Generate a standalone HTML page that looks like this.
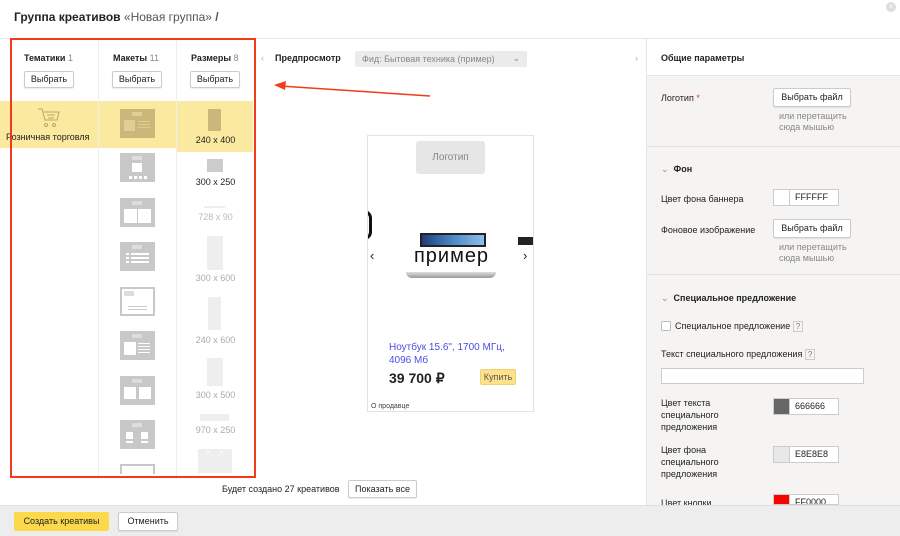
<!DOCTYPE html>
<html><head><meta charset="utf-8"><style>
*{box-sizing:border-box;margin:0;padding:0}
body{width:900px;height:536px;overflow:hidden;background:#fff;font-family:"Liberation Sans","Noto Sans CJK SC",sans-serif;font-size:9px;color:#222;position:relative}
.a{position:absolute}
.btn{position:absolute;border:1px solid #ccc;border-radius:2px;background:#fff;font-size:9px;text-align:center;color:#222;box-shadow:0 1px 1px rgba(0,0,0,.08)}
.g{color:#888}
.ic{position:absolute;background:#c8c8c8}
.ic i{position:absolute;background:#fff}
.sz{position:absolute;width:77px;text-align:center;font-size:9px}
.lbl{position:absolute;left:661px;font-size:9px;color:#222;line-height:12px}
.sw{position:absolute;left:773px;width:66px;height:17px;border:1px solid #ccc;background:#fff;font-size:9px}
.sw b{position:absolute;left:0;top:0;width:16px;height:15px;border-right:1px solid #ccc}
.sw span{position:absolute;left:21px;top:2px}
</style></head><body>
<div class="a" style="left:14px;top:10px;font-size:12px;font-weight:bold">Группа креативов <span style="font-weight:normal;color:#555">«Новая группа»</span> <span style="color:#555">/</span></div>
<div class="a" style="left:886px;top:2px;width:10px;height:10px;border-radius:50%;background:#ddd;color:#fff;font-size:8px;line-height:10px;text-align:center">×</div>
<div class="a" style="left:0;top:38px;width:900px;height:1px;background:#e8e8e8"></div>
<div class="a" style="left:98px;top:39px;width:1px;height:440px;background:#eee"></div>
<div class="a" style="left:176px;top:39px;width:1px;height:440px;background:#eee"></div>
<div class="a" style="left:12px;top:101px;width:86px;height:1px;background:#eee"></div>
<div class="a" style="left:0;top:101px;width:98px;height:47px;background:#fbe9a0"></div>
<div class="a" style="left:99px;top:101px;width:77px;height:47px;background:#fbe9a0"></div>
<div class="a" style="left:177px;top:101px;width:76px;height:51px;background:#fbe9a0"></div>
<div class="a" style="left:24px;top:53px;font-weight:bold">Тематики <span class="g" style="font-weight:normal">1</span></div>
<div class="a" style="left:113px;top:53px;font-weight:bold">Макеты <span class="g" style="font-weight:normal">11</span></div>
<div class="a" style="left:191px;top:53px;font-weight:bold">Размеры <span class="g" style="font-weight:normal">8</span></div>
<div class="btn" style="left:24px;top:71px;width:50px;height:17px;line-height:15px">Выбрать</div>
<div class="btn" style="left:112px;top:71px;width:50px;height:17px;line-height:15px">Выбрать</div>
<div class="btn" style="left:190px;top:71px;width:50px;height:17px;line-height:15px">Выбрать</div>
<svg class="a" style="left:36px;top:107px" width="26" height="22" viewBox="0 0 26 22" fill="none" stroke="#b8a66a" stroke-width="1"><path d="M2 2h4l3 11h12l2-8H8"/><path d="M11 8h8M12 11h6"/><circle cx="10" cy="18" r="1.5"/><circle cx="18" cy="18" r="1.5"/></svg>
<div class="a" style="left:6px;top:132px;font-size:9px">Розничная торговля</div>
<div class="ic" style="left:120px;top:109px;width:35px;height:29px;background:#cbb77a"><i style="left:12px;top:3px;width:10px;height:4px;background:#e0cf95"></i><i style="left:4px;top:11px;width:11px;height:11px;background:#e0cf95"></i><i style="left:18px;top:12px;width:12px;height:1px;background:#e0cf95"></i><i style="left:18px;top:15px;width:12px;height:1px;background:#e0cf95"></i><i style="left:18px;top:18px;width:12px;height:1px;background:#e0cf95"></i></div>
<div class="ic" style="left:120px;top:153px;width:35px;height:29px"><i style="left:12px;top:3px;width:10px;height:4px;background:#ddd"></i><i style="left:12px;top:10px;width:10px;height:9px"></i><i style="left:9px;top:23px;width:3px;height:3px"></i><i style="left:14px;top:23px;width:3px;height:3px"></i><i style="left:19px;top:23px;width:3px;height:3px"></i><i style="left:24px;top:23px;width:3px;height:3px"></i></div>
<div class="ic" style="left:120px;top:198px;width:35px;height:29px"><i style="left:12px;top:3px;width:10px;height:4px;background:#ddd"></i><i style="left:4px;top:11px;width:13px;height:14px"></i><i style="left:18px;top:11px;width:13px;height:14px"></i></div>
<div class="ic" style="left:120px;top:242px;width:35px;height:29px"><i style="left:12px;top:3px;width:10px;height:4px;background:#ddd"></i><i style="left:6px;top:11px;width:3px;height:2px"></i><i style="left:11px;top:11px;width:18px;height:2px"></i><i style="left:6px;top:15px;width:3px;height:2px"></i><i style="left:11px;top:15px;width:18px;height:2px"></i><i style="left:6px;top:19px;width:3px;height:2px"></i><i style="left:11px;top:19px;width:18px;height:2px"></i></div>
<div class="ic" style="left:120px;top:287px;width:35px;height:29px"><i style="left:2px;top:2px;width:31px;height:25px"></i><i style="left:4px;top:4px;width:10px;height:5px;background:#ddd"></i><i style="left:8px;top:19px;width:19px;height:1px;background:#ccc"></i><i style="left:8px;top:22px;width:19px;height:1px;background:#ccc"></i></div>
<div class="ic" style="left:120px;top:331px;width:35px;height:29px"><i style="left:12px;top:3px;width:10px;height:4px;background:#ddd"></i><i style="left:4px;top:11px;width:12px;height:13px"></i><i style="left:18px;top:12px;width:12px;height:1px"></i><i style="left:18px;top:15px;width:12px;height:1px"></i><i style="left:18px;top:18px;width:12px;height:1px"></i><i style="left:18px;top:21px;width:12px;height:1px"></i></div>
<div class="ic" style="left:120px;top:376px;width:35px;height:29px"><i style="left:12px;top:3px;width:10px;height:4px;background:#ddd"></i><i style="left:4px;top:11px;width:12px;height:12px"></i><i style="left:19px;top:11px;width:12px;height:12px"></i></div>
<div class="ic" style="left:120px;top:420px;width:35px;height:29px"><i style="left:12px;top:3px;width:10px;height:4px;background:#ddd"></i><i style="left:6px;top:12px;width:7px;height:7px"></i><i style="left:21px;top:12px;width:7px;height:7px"></i><i style="left:6px;top:21px;width:7px;height:2px"></i><i style="left:21px;top:21px;width:7px;height:2px"></i></div>
<div class="ic" style="left:120px;top:464px;width:35px;height:10px"><i style="left:2px;top:2px;width:31px;height:8px"></i></div>
<div class="a" style="left:208px;top:109px;width:13px;height:22px;background:#cbb77a"></div>
<div class="sz" style="left:177px;top:135px">240 x 400</div>
<div class="a" style="left:207px;top:159px;width:16px;height:13px;background:#ccc"></div>
<div class="sz" style="left:177px;top:177px">300 x 250</div>
<div class="a" style="left:204px;top:206px;width:21px;height:2px;background:#eee"></div>
<div class="sz" style="left:177px;top:212px;color:#bbb">728 x 90</div>
<div class="a" style="left:207px;top:236px;width:16px;height:34px;background:#eee"></div>
<div class="sz" style="left:177px;top:273px;color:#aaa">300 x 600</div>
<div class="a" style="left:208px;top:297px;width:13px;height:33px;background:#eee"></div>
<div class="sz" style="left:177px;top:335px;color:#aaa">240 x 600</div>
<div class="a" style="left:207px;top:358px;width:16px;height:28px;background:#eee"></div>
<div class="sz" style="left:177px;top:390px;color:#aaa">300 x 500</div>
<div class="a" style="left:200px;top:414px;width:29px;height:7px;background:#eee"></div>
<div class="sz" style="left:177px;top:425px;color:#aaa">970 x 250</div>
<div class="a" style="left:198px;top:449px;width:34px;height:24px;background:#eee;color:#fff;font-size:8px;text-align:center;line-height:12px">↖ ↗</div>
<div class="a" style="left:10px;top:38px;width:246px;height:440px;border:2px solid #f23a1d"></div>
<svg class="a" style="left:270px;top:78px" width="165" height="24"><line x1="10" y1="8" x2="160" y2="18" stroke="#f23a1d" stroke-width="1.5"/><path d="M4 7 L16 3 L15 12 Z" fill="#f23a1d"/></svg>
<div class="a" style="left:261px;top:53px;color:#aaa">‹</div>
<div class="a" style="left:275px;top:53px;font-weight:bold">Предпросмотр</div>
<div class="a" style="left:355px;top:51px;width:172px;height:16px;background:#ebebeb;border-radius:2px;color:#888;padding:3px 7px">Фид: Бытовая техника (пример)<span style="position:absolute;right:7px;top:2px">⌄</span></div>
<div class="a" style="left:635px;top:53px;color:#aaa">›</div>
<div class="a" style="left:367px;top:135px;width:167px;height:277px;border:1px solid #e2e2e2;background:#fff;overflow:hidden">
 <div class="a" style="left:48px;top:5px;width:69px;height:33px;background:#e6e6e6;border-radius:3px;color:#888;font-size:10px;text-align:center;line-height:33px">Логотип</div>
 <div class="a" style="left:-8px;top:74px;width:12px;height:30px;border:3px solid #111;border-left:none;border-radius:0 8px 8px 0"></div>
 <div class="a" style="left:150px;top:101px;width:20px;height:8px;background:#222"></div>
 <div class="a" style="left:52px;top:97px;width:66px;height:14px;background:linear-gradient(90deg,#1c3f7a,#4d89c8,#8ec0e8);border:2px solid #222"></div>
 <div class="a" style="left:38px;top:136px;width:90px;height:6px;background:linear-gradient(#ddd,#999);border-radius:0 0 8px 8px"></div>
 <div class="a" style="left:0;top:107px;width:167px;text-align:center;font-size:20px;color:#111;letter-spacing:1px;line-height:26px">пример</div>
 <div class="a" style="left:2px;top:112px;font-size:13px">‹</div>
 <div class="a" style="left:155px;top:112px;font-size:13px">›</div>
 <div class="a" style="left:21px;top:205px;color:#4b4be6;font-size:10px;line-height:13px">Ноутбук 15.6", 1700 МГц,<br>4096 Мб</div>
 <div class="a" style="left:21px;top:234px;font-size:14px;font-weight:bold">39 700 ₽</div>
 <div class="a" style="left:112px;top:233px;width:36px;height:16px;background:#fde28a;border:1px solid #f0d070;border-radius:2px;font-size:9px;text-align:center;line-height:14px;color:#555">Купить</div>
 <div class="a" style="left:3px;top:267px;font-size:7px;color:#444">О продавце</div>
</div>
<div class="a" style="left:222px;top:484px">Будет создано 27 креативов</div>
<div class="btn" style="left:348px;top:480px;width:69px;height:18px;line-height:16px">Показать все</div>
<div class="a" style="left:646px;top:39px;width:254px;height:466px;background:#f5f4f3;border-left:1px solid #e5e5e5"></div>
<div class="a" style="left:647px;top:39px;width:253px;height:37px;background:#fff;border-bottom:1px solid #e5e5e5"></div>
<div class="a" style="left:661px;top:53px;font-weight:bold">Общие параметры</div>
<div class="lbl" style="top:92px">Логотип <span style="color:#e33">*</span></div>
<div class="btn" style="left:773px;top:88px;width:78px;height:19px;line-height:17px">Выбрать файл</div>
<div class="a" style="left:779px;top:111px;color:#888;line-height:11px">или перетащить<br>сюда мышью</div>
<div class="a" style="left:647px;top:146px;width:253px;height:1px;background:#e2e2e2"></div>
<div class="a" style="left:661px;top:164px;font-weight:bold"><span style="color:#888;font-weight:normal">⌄</span>&nbsp; Фон</div>
<div class="lbl" style="top:193px">Цвет фона баннера</div>
<div class="sw" style="top:189px"><b style="background:#fff"></b><span>FFFFFF</span></div>
<div class="lbl" style="top:224px">Фоновое изображение</div>
<div class="btn" style="left:773px;top:219px;width:78px;height:19px;line-height:17px">Выбрать файл</div>
<div class="a" style="left:779px;top:242px;color:#888;line-height:11px">или перетащить<br>сюда мышью</div>
<div class="a" style="left:647px;top:274px;width:253px;height:1px;background:#e2e2e2"></div>
<div class="a" style="left:661px;top:293px;font-weight:bold"><span style="color:#888;font-weight:normal">⌄</span>&nbsp; Специальное предложение</div>
<div class="a" style="left:661px;top:321px;width:10px;height:10px;border:1px solid #bbb;background:#fff;border-radius:2px"></div>
<div class="lbl" style="left:675px;top:320px">Специальное предложение <span style="border:1px solid #ccc;padding:0 2px;font-size:8px;color:#777">?</span></div>
<div class="lbl" style="top:348px">Текст специального предложения <span style="border:1px solid #ccc;padding:0 2px;font-size:8px;color:#777">?</span></div>
<div class="a" style="left:661px;top:368px;width:203px;height:16px;border:1px solid #ccc;background:#fff"></div>
<div class="lbl" style="top:397px">Цвет текста<br>специального<br>предложения</div>
<div class="sw" style="top:398px"><b style="background:#666"></b><span>666666</span></div>
<div class="lbl" style="top:444px">Цвет фона<br>специального<br>предложения</div>
<div class="sw" style="top:446px"><b style="background:#e8e8e8"></b><span>E8E8E8</span></div>
<div class="lbl" style="top:497px;height:8px;overflow:hidden">Цвет кнопки</div>
<div class="sw" style="top:494px;height:11px;overflow:hidden"><b style="background:#f00"></b><span>FF0000</span></div>
<div class="a" style="left:0;top:505px;width:900px;height:31px;background:#ededed;border-top:1px solid #e0e0e0"></div>
<div class="a" style="left:14px;top:512px;width:95px;height:19px;background:#fbd94a;border-radius:2px;text-align:center;line-height:19px;font-size:9px">Создать креативы</div>
<div class="btn" style="left:118px;top:512px;width:60px;height:19px;line-height:17px">Отменить</div>
</body></html>
